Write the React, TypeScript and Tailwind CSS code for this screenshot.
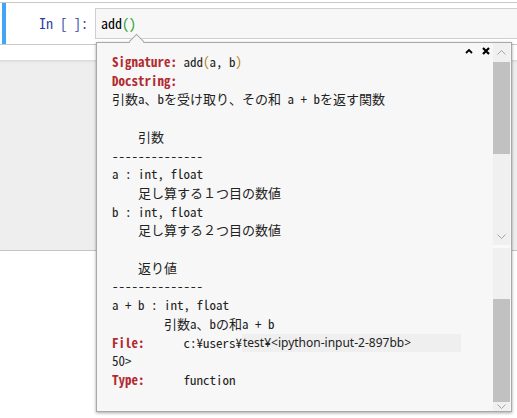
import React from 'react';

const mono = "font-['Noto_Sans_Mono_CJK_JP','Liberation_Mono','Noto_Sans_CJK_JP',monospace]";

function ScrollArrow({ up }: { up?: boolean }) {
  return (
    <svg width="9" height="6" viewBox="0 0 9 6" className="text-[#a3a3a3]">
      <path d={up ? 'M0.5 5.5 L4.5 1.5 L8.5 5.5' : 'M0.5 0.5 L4.5 4.5 L8.5 0.5'} fill="none" stroke="currentColor" strokeWidth="1" />
    </svg>
  );
}

function PagerScrollbar() {
  return (
    <div className="w-[17px] mr-[1px] flex flex-col bg-[#f0f0f0]">
      <div className="h-[202px] flex flex-col">
        <div className="h-[17px] flex items-center justify-center">
          <ScrollArrow up />
        </div>
        <div className="h-[2px]" />
        <div className="h-[92px] bg-[#c1c1c1]" />
        <div className="flex-1" />
        <div className="h-[17px] flex items-center justify-center">
          <ScrollArrow />
        </div>
      </div>
      <div className="h-[3px] bg-[#f9f9f9]" />
      <div className="flex-1 flex flex-col">
        <div className="h-[51px]" />
        <div className="h-[103px] bg-[#c1c1c1]" />
        <div className="flex-1 flex items-center justify-center">
          <ScrollArrow />
        </div>
      </div>
    </div>
  );
}

function Red({ children }: { children: React.ReactNode }) {
  return <span className="text-[#b22b31] font-bold">{children}</span>;
}

function Tooltip() {
  return (
    <div className="absolute left-[96px] top-[42px] w-[416px] h-[370px]">
      {/* pointer arrow */}
      <div className="absolute left-[35px] -top-[6px] w-[11px] h-[11px] rotate-45 bg-[#f7f7f7] border-t border-l border-[#a9a9a9] z-10" />
      <div className="relative h-full flex bg-[#f7f7f7] border border-[#a9a9a9] shadow-[0_1px_3px_rgba(0,0,0,0.35)]">
        <div className="relative flex-1 overflow-hidden">
          <div className="absolute right-[3px] top-[4px] flex items-center gap-[9px]">
            <svg width="8" height="6" viewBox="0 0 8 6">
              <path d="M1 5 L4 2 L7 5" fill="none" stroke="#000" strokeWidth="1.8" />
            </svg>
            <svg width="8" height="8" viewBox="0 0 8 8">
              <path d="M1 1 L7 7 M7 1 L1 7" fill="none" stroke="#000" strokeWidth="2.2" />
            </svg>
          </div>
          <pre className={`${mono} pl-[15px] pt-[10px] text-[13px] leading-[18.7px] text-[#222] whitespace-pre`}>
            <Red>Signature:</Red> add<span className="text-[#b27d12]">(</span>a, b<span className="text-[#b27d12]">)</span>
            {'\n'}
            <Red>Docstring:</Red>
            {'\n'}
            {'引数a、bを受け取り、その和 a + bを返す関数\n'}
            {'\n'}
            {'    引数\n'}
            {'--------------\n'}
            {'a : int, float\n'}
            {'    足し算する１つ目の数値\n'}
            {'b : int, float\n'}
            {'    足し算する２つ目の数値\n'}
            {'\n'}
            {'    返り値\n'}
            {'--------------\n'}
            {'a + b : int, float\n'}
            {'        引数a、bの和a + b\n'}
            <Red>File:</Red>
            {'      c:¥users¥'}
            <span className="inline-block w-[219px] bg-[#efefef] font-['Noto_Sans','Noto_Sans_CJK_JP',sans-serif] text-[12px] align-top pl-[1px]">
              test¥&lt;ipython-input-2-897bb&gt;
            </span>
            {'\n'}
            {'50>\n'}
            <Red>Type:</Red>
            {'      function'}
          </pre>
        </div>
        <PagerScrollbar />
      </div>
    </div>
  );
}

export default function App() {
  return (
    <div className={`relative w-[517px] h-[418px] bg-white overflow-hidden ${mono}`}>
      <div className="h-[2px]" />
      {/* code cell */}
      <div className="flex h-[43px] border-t border-b border-[#c8c8c8]">
        <div className="ml-[2px] w-[4px] bg-[#42a5f5]" />
        <div className="w-[89px] flex items-center justify-end pr-[7px] pb-[1px] text-[14px] text-[#303f9f]">
          In [ ]:
        </div>
        <div className="flex-1 mt-[5px] h-[31px] border border-r-0 border-[#cfcfcf] bg-[#f7f7f7] flex items-center pl-[5px] text-[14px] text-black">
          add<span className="text-[#1ea01e]">()</span>
        </div>
      </div>
      <div className="h-[15px]" />
      <div className="h-[191px] bg-[#eeeeee] border-b border-[#c4c4c4] shadow-[inset_0_3px_3px_-2px_rgba(0,0,0,0.12)]" />
      <Tooltip />
    </div>
  );
}
